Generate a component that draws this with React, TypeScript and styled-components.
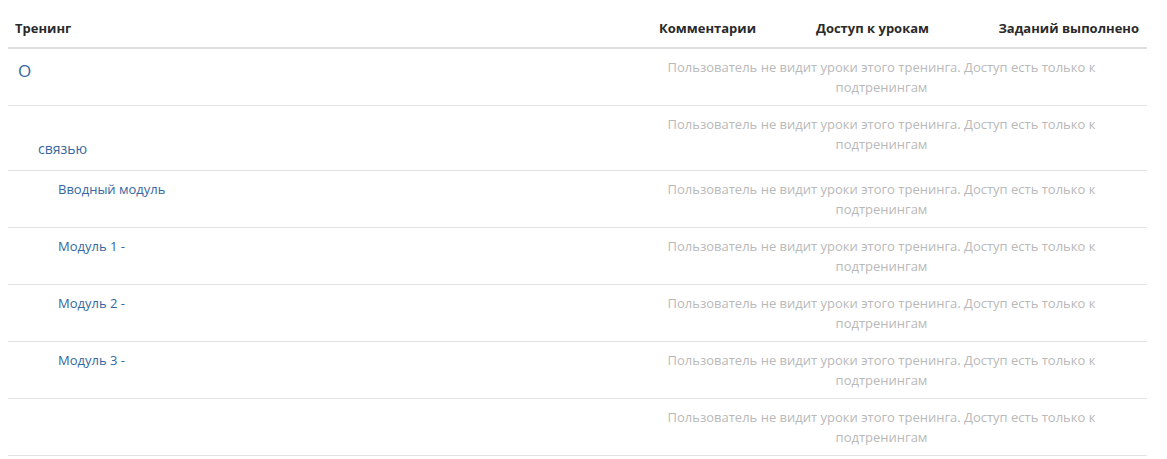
import React from "react";
import styled, { createGlobalStyle } from "styled-components";

const GlobalStyle = createGlobalStyle`
  body {
    margin: 0;
    background: #fff;
    font-family: "Open Sans", "Liberation Sans", Arial, sans-serif;
  }
`;

const TableWrapper = styled.div`
  padding: 8px 20px 0 8px;

  .grid {
    display: grid;
    grid-template-columns: 1fr 131px 199px 175px;
  }
`;

const HeadRow = styled.div`
  border-bottom: 2px solid #dedede;
  padding: 10px 0 9px;
`;

const HeadCell = styled.div<{ $align: "left" | "center" | "right" }>`
  font-size: 13px;
  font-weight: 700;
  line-height: 20px;
  color: #2a2a2a;
  text-align: ${(p) => p.$align};
  padding: ${(p) =>
    p.$align === "left" ? "0 0 0 7px" : p.$align === "right" ? "0 8px 0 0" : "0"};
  white-space: nowrap;
`;

const Row = styled.div`
  border-bottom: 1px solid #e3e3e3;
  align-items: start;
`;

const TitleCell = styled.div<{ $level: number }>`
  padding-left: ${(p) => 10 + p.$level * 20}px;
  padding-top: ${(p) => (p.$level === 0 ? 10 : p.$level === 1 ? 2 : 8)}px;
  padding-bottom: 8px;
`;

const TitleLink = styled.a<{ $level: number }>`
  color: #3567a0;
  text-decoration: none;
  font-size: ${(p) => (p.$level === 0 ? 17 : p.$level === 1 ? 14 : 13)}px;
  line-height: ${(p) => (p.$level === 0 ? 24 : p.$level === 1 ? 27 : 20)}px;
  display: block;
`;

const Message = styled.div`
  grid-column: 2 / 5;
  padding: 8px 26px 8px 0;
  text-align: center;
  font-size: 13px;
  line-height: 20px;
  color: #b9b9b9;
`;

type Item = { level: number; lines: string[] };

const items: Item[] = [
  { level: 0, lines: ["О"] },
  { level: 1, lines: ["\u00a0", "связью"] },
  { level: 2, lines: ["Вводный модуль"] },
  { level: 2, lines: ["Модуль 1 -"] },
  { level: 2, lines: ["Модуль 2 -"] },
  { level: 2, lines: ["Модуль 3 -"] },
  { level: 2, lines: ["\u00a0"] },
];

const message =
  "Пользователь не видит уроки этого тренинга. Доступ есть только к подтренингам";

export default function App() {
  return (
    <>
      <GlobalStyle />
      <TableWrapper>
        <HeadRow className="grid">
          <HeadCell $align="left">Тренинг</HeadCell>
          <HeadCell $align="center">Комментарии</HeadCell>
          <HeadCell $align="center">Доступ к урокам</HeadCell>
          <HeadCell $align="right">Заданий выполнено</HeadCell>
        </HeadRow>
        {items.map((item, i) => (
          <Row className="grid" key={i}>
            <TitleCell $level={item.level}>
              {item.lines.map((line, j) => (
                <TitleLink $level={item.level} href="#" key={j}>
                  {line}
                </TitleLink>
              ))}
            </TitleCell>
            <Message>{message}</Message>
          </Row>
        ))}
      </TableWrapper>
    </>
  );
}
